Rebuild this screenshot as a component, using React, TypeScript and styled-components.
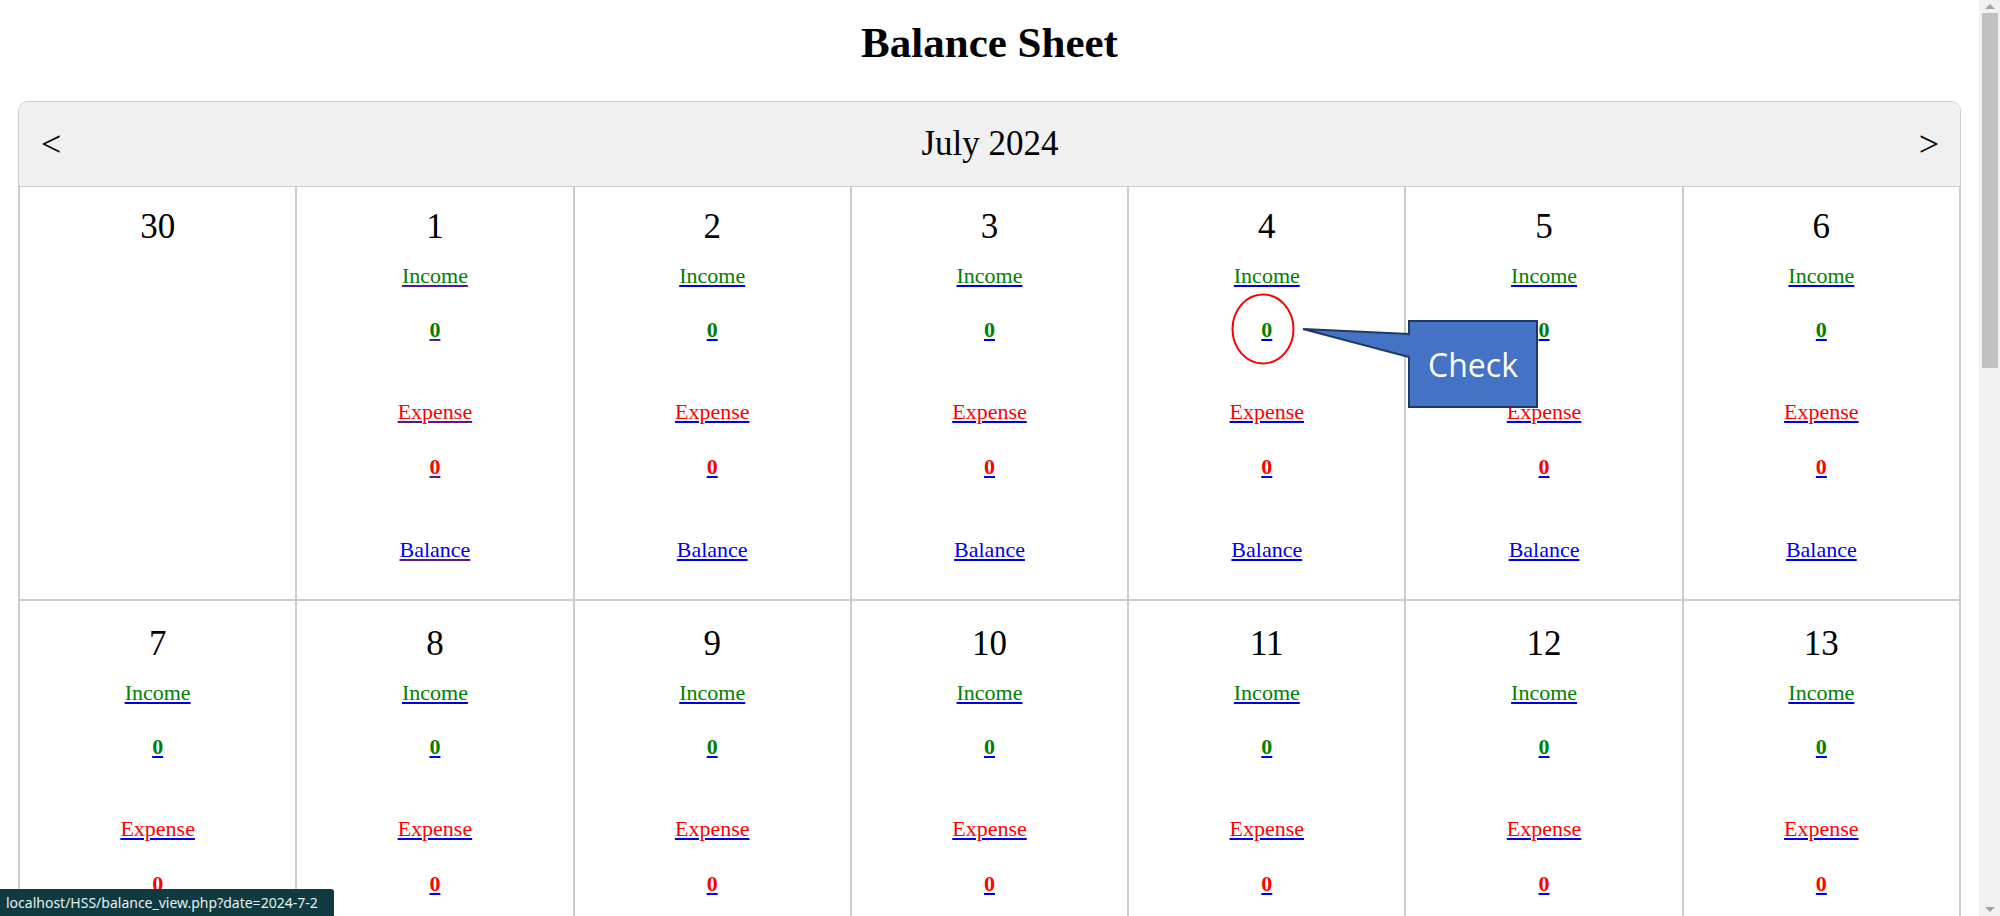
import React from "react";
import styled, { createGlobalStyle } from "styled-components";

const GlobalStyle = createGlobalStyle`
  html, body {
    margin: 0;
    padding: 0;
    overflow: hidden;
    background: #ffffff;
  }
`;

const Viewport = styled.div`
  display: flex;
  width: 100vw;
  height: 100vh;
  overflow: hidden;
  position: relative;
`;

const Page = styled.main`
  flex: 1;
  min-width: 0;
  position: relative;
  overflow: hidden;
  font-family: "Liberation Serif", "Times New Roman", serif;
  color: #000;
`;

const Title = styled.h1`
  margin: 0;
  padding-top: 18px;
  text-align: center;
  font-family: "Liberation Serif", "Times New Roman", serif;
  font-weight: bold;
  font-size: 43px;
  line-height: 50px;
`;

const Calendar = styled.section`
  margin: 33px 18px 50px;
  border: 1px solid #cccccc;
  border-radius: 10px;
  overflow: hidden;
`;

const MonthBar = styled.header`
  height: 84px;
  background: #f0f0f0;
  display: flex;
  align-items: center;
  justify-content: space-between;
  padding: 0 21px 0 22px;
  font-size: 35px;
`;

const NavArrow = styled.a`
  font-family: "Liberation Serif", "Times New Roman", serif;
  font-size: 36px;
  line-height: 40px;
  color: #000;
  text-decoration: none;
`;

const MonthName = styled.span`
  font-size: 35px;
  line-height: 40px;
`;

const Grid = styled.div`
  display: grid;
  grid-template-columns: repeat(7, 1fr);
`;

const Cell = styled.div<{ $first?: boolean }>`
  box-sizing: border-box;
  height: 414px;
  border: 1px solid #cccccc;
  padding-top: ${(p) => (p.$first ? 20 : 23)}px;
  display: flex;
  flex-direction: column;
  align-items: center;
`;

const DayNumber = styled.div`
  font-size: 35px;
  line-height: 40px;
`;

const EntryLink = styled.a<{ $visited?: boolean; $gap: number; $bold?: boolean }>`
  margin-top: ${(p) => p.$gap}px;
  font-size: 22px;
  line-height: 26px;
  font-weight: ${(p) => (p.$bold ? "bold" : "normal")};
  color: ${(p) => (p.$visited ? "#551a8b" : "#0000ee")};
  text-decoration: underline;
  cursor: pointer;
`;

const Tone = styled.span<{ $tone: string }>`
  color: ${(p) => p.$tone};
`;

const StatusBar = styled.div`
  position: absolute;
  left: 0;
  bottom: 0;
  height: 27px;
  width: 334px;
  box-sizing: border-box;
  padding-left: 6px;
  display: flex;
  align-items: center;
  background: #0e3a40;
  color: #e8f0f0;
  border-top-right-radius: 3px;
  font-family: "Noto Sans", "Open Sans", sans-serif;
  font-size: 14px;
  white-space: nowrap;
`;

const ScrollBar = styled.div`
  width: 21px;
  flex: 0 0 21px;
  background: #f1f1f1;
  display: flex;
  flex-direction: column;
`;

const ScrollButton = styled.div<{ $down?: boolean }>`
  height: 13px;
  display: flex;
  align-items: center;
  justify-content: center;
  &::before {
    content: "";
    width: 0;
    height: 0;
    border-left: 5px solid transparent;
    border-right: 5px solid transparent;
    ${(p) =>
      p.$down
        ? "border-top: 5px solid #a3a3a3;"
        : "border-bottom: 5px solid #a3a3a3;"}
  }
`;

const ScrollTrack = styled.div`
  flex: 1;
  padding: 0 2px 0 3px;
`;

const ScrollThumb = styled.div`
  height: 355px;
  background: #c1c1c1;
`;

const Ellipse = styled.svg`
  position: absolute;
  left: 1230px;
  top: 292px;
  overflow: visible;
`;

const Callout = styled.div`
  position: absolute;
  left: 1300px;
  top: 318px;
  width: 240px;
  height: 92px;
`;

const CalloutShape = styled.svg`
  position: absolute;
  inset: 0;
  overflow: visible;
`;

const CalloutLabel = styled.div`
  position: absolute;
  left: 109px;
  top: 3px;
  width: 128px;
  height: 86px;
  display: flex;
  align-items: center;
  justify-content: center;
  color: #ffffff;
  font-family: "Open Sans", "Noto Sans", sans-serif;
  font-size: 32px;
`;

type Day = { d: number; other?: boolean };

const weeks: Day[][] = [
  [{ d: 30, other: true }, { d: 1 }, { d: 2 }, { d: 3 }, { d: 4 }, { d: 5 }, { d: 6 }],
  [7, 8, 9, 10, 11, 12, 13].map((d) => ({ d })),
  [14, 15, 16, 17, 18, 19, 20].map((d) => ({ d })),
  [21, 22, 23, 24, 25, 26, 27].map((d) => ({ d })),
  [{ d: 28 }, { d: 29 }, { d: 30 }, { d: 31 }, { d: 1, other: true }, { d: 2, other: true }, { d: 3, other: true }],
];

function DayCell({ day, first }: { day: Day; first: boolean }) {
  const visited = !day.other && day.d === 1;
  return (
    <Cell $first={first}>
      <DayNumber>{day.d}</DayNumber>
      {!day.other && (
        <>
          <EntryLink $gap={16} $visited={visited}>
            <Tone $tone="#008000">Income</Tone>
          </EntryLink>
          <EntryLink $gap={28} $visited={visited} $bold>
            <Tone $tone="#008000">0</Tone>
          </EntryLink>
          <EntryLink $gap={56} $visited={visited}>
            <Tone $tone="#ff0000">Expense</Tone>
          </EntryLink>
          <EntryLink $gap={29} $visited={visited} $bold>
            <Tone $tone="#ff0000">0</Tone>
          </EntryLink>
          <EntryLink $gap={57} $visited={visited}>
            <Tone $tone="#0000ee">Balance</Tone>
          </EntryLink>
        </>
      )}
    </Cell>
  );
}

export default function App() {
  return (
    <>
      <GlobalStyle />
      <Viewport>
        <Page>
          <Title>Balance Sheet</Title>
          <Calendar>
            <MonthBar>
              <NavArrow>&lt;</NavArrow>
              <MonthName>July 2024</MonthName>
              <NavArrow>&gt;</NavArrow>
            </MonthBar>
            <Grid>
              {weeks.map((w, wi) =>
                w.map((day, di) => <DayCell key={`${wi}-${di}`} day={day} first={wi === 0} />)
              )}
            </Grid>
          </Calendar>

          <Ellipse width="66" height="74" viewBox="0 0 66 74">
            <ellipse cx="33" cy="37" rx="30.5" ry="34.5" fill="none" stroke="#ff0000" strokeWidth="2" />
          </Ellipse>

          <Callout>
            <CalloutShape width="240" height="92" viewBox="0 0 240 92">
              <path
                d="M109 3 H237 V89 H109 V39 L3 11 L109 16 Z"
                fill="#4472c4"
                stroke="#1f3864"
                strokeWidth="2"
                strokeLinejoin="miter"
              />
            </CalloutShape>
            <CalloutLabel>Check</CalloutLabel>
          </Callout>

          <StatusBar>localhost/HSS/balance_view.php?date=2024-7-2</StatusBar>
        </Page>
        <ScrollBar>
          <ScrollButton />
          <ScrollTrack>
            <ScrollThumb />
          </ScrollTrack>
          <ScrollButton $down />
        </ScrollBar>
      </Viewport>
    </>
  );
}
